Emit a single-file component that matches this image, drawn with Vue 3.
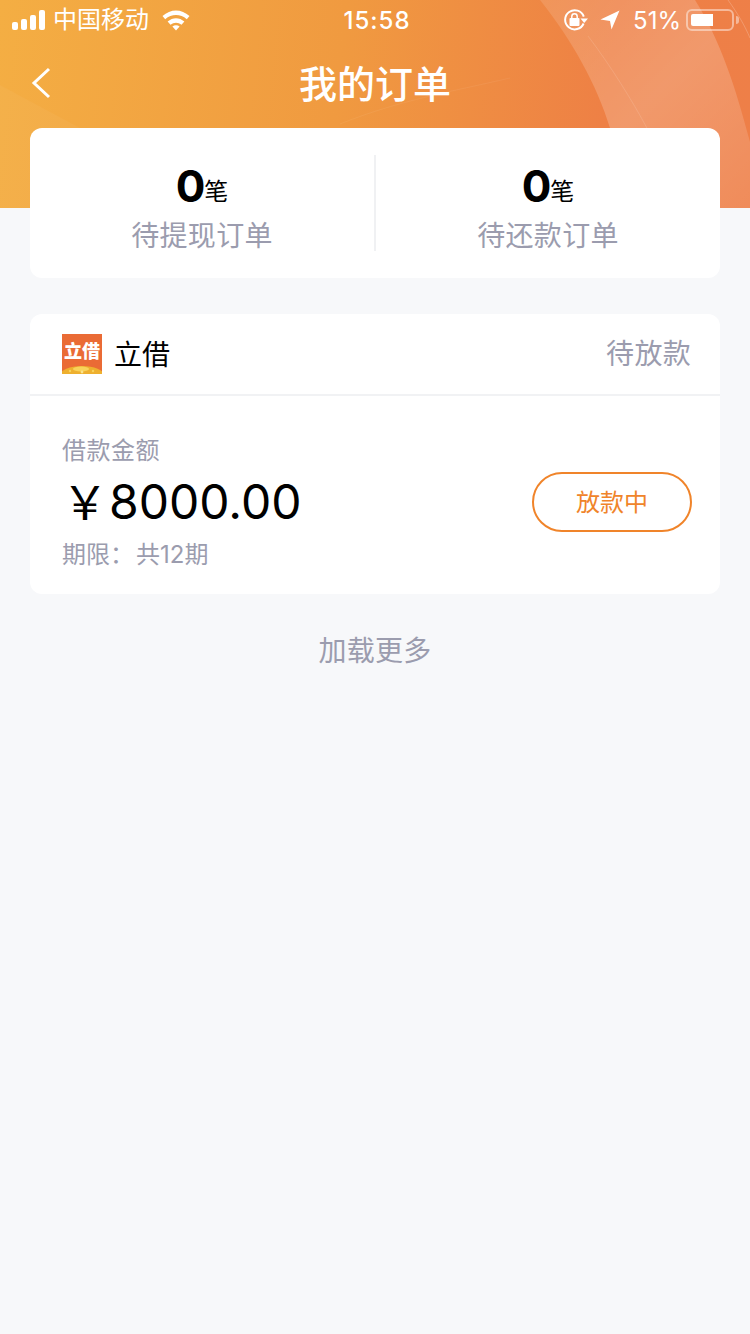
<template>
  <div class="page">
    <div class="banner">
      <svg class="banner-art" width="750" height="208" viewBox="0 0 750 208">
        <defs>
          <linearGradient id="band" x1="0" y1="0" x2="1" y2="1">
            <stop offset="0" stop-color="#fff" stop-opacity="0.12" />
            <stop offset="0.5" stop-color="#fff" stop-opacity="0.2" />
            <stop offset="1" stop-color="#fff" stop-opacity="0.1" />
          </linearGradient>
        </defs>
        <path d="M0 85 L80 128 L120 208 L0 208 Z" fill="#fff" opacity="0.04" />
        <path d="M540 0 C572 40 597 85 610 128 L630 208 L750 208 L750 142 C735 85 720 40 695 0 Z" fill="url(#band)" />
        <path d="M588 36 C610 65 632 100 648 130" fill="none" stroke="#fff" stroke-width="1" opacity="0.12" />
        <path d="M728 0 C738 14 745 26 750 38" fill="none" stroke="#fff" stroke-width="1" opacity="0.2" />
        <path d="M340 124 C400 100 450 92 510 78" fill="none" stroke="#fff" stroke-width="1" opacity="0.06" />
      </svg>

      <div class="status-bar">
        <div class="status-left">
          <div class="signal">
            <i style="height: 8px"></i>
            <i style="height: 11px"></i>
            <i style="height: 15px"></i>
            <i style="height: 20px"></i>
          </div>
          <span class="carrier">中国移动</span>
          <svg class="wifi" width="28" height="22" viewBox="0 0 28 22">
            <path d="M0.5 7 C8.5 -0.5 19.5 -0.5 27.5 7 L24.8 10.2 C18.4 4.6 9.6 4.6 3.2 10.2 Z" fill="#fff" />
            <path d="M5.6 12.6 C10.8 8 17.2 8 22.4 12.6 L19.5 15.8 C16.2 13 11.8 13 8.5 15.8 Z" fill="#fff" />
            <path d="M10.4 17.4 C12.6 15.8 15.4 15.8 17.6 17.4 L14 21.4 Z" fill="#fff" />
          </svg>
        </div>
        <span class="clock">15:58</span>
        <div class="status-right">
          <svg width="24" height="24" viewBox="0 0 24 24">
            <path d="M19.6 15.5 A9.6 9.6 0 1 1 19.8 8.6" fill="none" stroke="#fff" stroke-width="2" />
            <path d="M16.5 10.5 L24 10.5 L20.2 15 Z" fill="#fff" />
            <rect x="5.5" y="10" width="10" height="8" rx="1" fill="#fff" />
            <path d="M7.8 10 V8.4 A2.7 2.7 0 0 1 13.2 8.4 V10" fill="none" stroke="#fff" stroke-width="1.5" />
          </svg>
          <svg class="arrow" width="20" height="20" viewBox="0 0 20 20">
            <path d="M0.5 9.5 L19.5 0.5 L11.5 19.5 L10 11 Z" fill="#fff" />
          </svg>
          <span class="percent">51%</span>
          <div class="battery"><div class="battery-level"></div></div>
          <div class="battery-tip"></div>
        </div>
      </div>

      <div class="nav">
        <svg class="back" width="22" height="32" viewBox="0 0 22 32">
          <path d="M19 2 L4 16 L19 30" fill="none" stroke="#fff" stroke-width="3" />
        </svg>
        <h1>我的订单</h1>
      </div>
    </div>

    <div class="content">
      <div class="card summary">
        <div v-for="item in summary" :key="item.label" class="summary-item">
          <div class="count"><b>0</b><span>笔</span></div>
          <div class="summary-label">{{ item.label }}</div>
        </div>
      </div>

      <div class="card order">
        <div class="order-head">
          <div class="brand">
            <div class="logo">
              <span>立借</span>
              <svg width="40" height="12" viewBox="0 0 40 12">
                <ellipse cx="20" cy="13" rx="22" ry="9" fill="#eeb02f" />
                <ellipse cx="19" cy="7" rx="8" ry="2.4" fill="#f8d25a" />
                <circle cx="8" cy="9" r="1.2" fill="#f8d25a" />
                <circle cx="31" cy="9" r="1.2" fill="#f8d25a" />
                <circle cx="20" cy="10" r="1.4" fill="#fbe38a" />
              </svg>
            </div>
            <span class="brand-name">立借</span>
          </div>
          <span class="order-state">待放款</span>
        </div>
        <div class="order-body">
          <div>
            <div class="amount-label">借款金额</div>
            <div class="amount"><span class="yen">￥</span>8000.00</div>
            <div class="term">期限：<span>共12期</span></div>
          </div>
          <div class="status-btn">放款中</div>
        </div>
      </div>

      <div class="more">加载更多</div>
    </div>
  </div>
</template>

<script setup>
const summary = [
  { label: "待提现订单" },
  { label: "待还款订单" }
]
</script>

<style>
html,
body {
  background: #f7f8fa;
}
</style>

<style scoped>
.page {
  width: 750px;
  height: 1334px;
  overflow: hidden;
  background: #f7f8fa;
  font-family: Inter, "Noto Sans CJK SC", sans-serif;
}

.banner {
  position: relative;
  height: 208px;
  background: linear-gradient(96deg, #f4ae43 0%, #f09a40 45%, #ee8045 80%, #ee7f48 100%);
  color: #fff;
}

.banner-art {
  position: absolute;
  top: 0;
  left: 0;
}

.status-bar {
  position: relative;
  height: 40px;
  display: grid;
  grid-template-columns: 1fr auto 1fr;
  align-items: center;
}

.status-left {
  display: flex;
  align-items: center;
  padding-left: 12px;
}

.signal {
  display: flex;
  align-items: flex-end;
  gap: 3px;
  height: 20px;
}

.signal i {
  width: 6px;
  border-radius: 2px;
  background: #fff;
}

.carrier {
  margin-left: 8px;
  font-size: 24px;
  line-height: 40px;
}

.wifi {
  margin-left: 13px;
}

.clock {
  margin-left: 4px;
  font-size: 24px;
  font-weight: 500;
  letter-spacing: 1px;
}

.status-right {
  display: flex;
  align-items: center;
  justify-content: flex-end;
  padding-right: 11px;
}

.arrow {
  margin-left: 12px;
}

.percent {
  margin-left: 13px;
  font-size: 24px;
}

.battery {
  width: 48px;
  height: 22px;
  margin-left: 5px;
  padding: 3px;
  box-sizing: border-box;
  border: 2px solid rgba(255, 255, 255, 0.45);
  border-radius: 6px;
}

.battery-level {
  width: 22px;
  height: 100%;
  background: #fff;
  border-radius: 2px 0 0 2px;
}

.battery-tip {
  width: 3px;
  height: 8px;
  margin-left: 2px;
  background: rgba(255, 255, 255, 0.45);
  border-radius: 0 3px 3px 0;
}

.nav {
  position: relative;
  height: 88px;
  display: flex;
  align-items: center;
  justify-content: center;
}

.back {
  position: absolute;
  left: 30px;
  top: 27px;
}

.nav h1 {
  margin: 0;
  font-size: 38px;
  font-weight: 500;
  line-height: 50px;
}

.content {
  position: relative;
  margin-top: -80px;
  padding: 0 30px;
}

.card {
  background: #fff;
  border-radius: 12px;
}

.summary {
  display: flex;
  align-items: center;
  height: 150px;
}

.summary-item {
  flex: 1;
  height: 96px;
  text-align: center;
}

.summary-item:first-child {
  border-right: 2px solid #f0f1f3;
}

.count {
  height: 61px;
  line-height: 62px;
  color: #000;
}

.count b {
  font-size: 44px;
  font-weight: 700;
}

.count span {
  margin-left: -1px;
  font-size: 24px;
  vertical-align: 2px;
}

.summary-label {
  font-size: 28px;
  letter-spacing: 0.3px;
  line-height: 40px;
  color: #9b9cae;
}

.order {
  height: 280px;
  margin-top: 36px;
}

.order-head {
  height: 80px;
  display: flex;
  align-items: center;
  justify-content: space-between;
  padding: 0 29px 0 32px;
  border-bottom: 2px solid #f1f2f4;
}

.brand {
  display: flex;
  align-items: center;
}

.logo {
  position: relative;
  width: 40px;
  height: 40px;
  overflow: hidden;
  background: #ea6b35;
  text-align: center;
}

.logo span {
  display: block;
  font-size: 18px;
  font-weight: 900;
  line-height: 36px;
  color: #fff;
}

.logo svg {
  position: absolute;
  left: 0;
  bottom: 0;
}

.brand-name {
  margin: 0 0 2px 12px;
  font-size: 28px;
  color: #000;
}

.order-state {
  margin-bottom: 4px;
  font-size: 28px;
  letter-spacing: 0.3px;
  color: #9b9cae;
}

.order-body {
  display: flex;
  align-items: flex-start;
  justify-content: space-between;
  padding: 39px 28px 0 32px;
}

.amount-label,
.term {
  font-size: 24px;
  line-height: 32px;
  color: #9b9cae;
}

.amount-label {
  letter-spacing: 0.5px;
}

.amount {
  height: 56px;
  margin: 7px 0 9px;
  font-size: 48px;
  line-height: 56px;
  color: #000;
}

.yen {
  display: inline-block;
  width: 47px;
  font-size: 46px;
}

.term span {
  margin-left: 2px;
}

.status-btn {
  width: 160px;
  height: 60px;
  margin-top: 37px;
  box-sizing: border-box;
  border: 2px solid #f0842a;
  border-radius: 30px;
  font-size: 24px;
  line-height: 58px;
  text-align: center;
  color: #f0842a;
}

.more {
  margin-top: 35px;
  font-size: 28px;
  letter-spacing: 0.2px;
  line-height: 44px;
  text-align: center;
  color: #9b9cae;
}
</style>
